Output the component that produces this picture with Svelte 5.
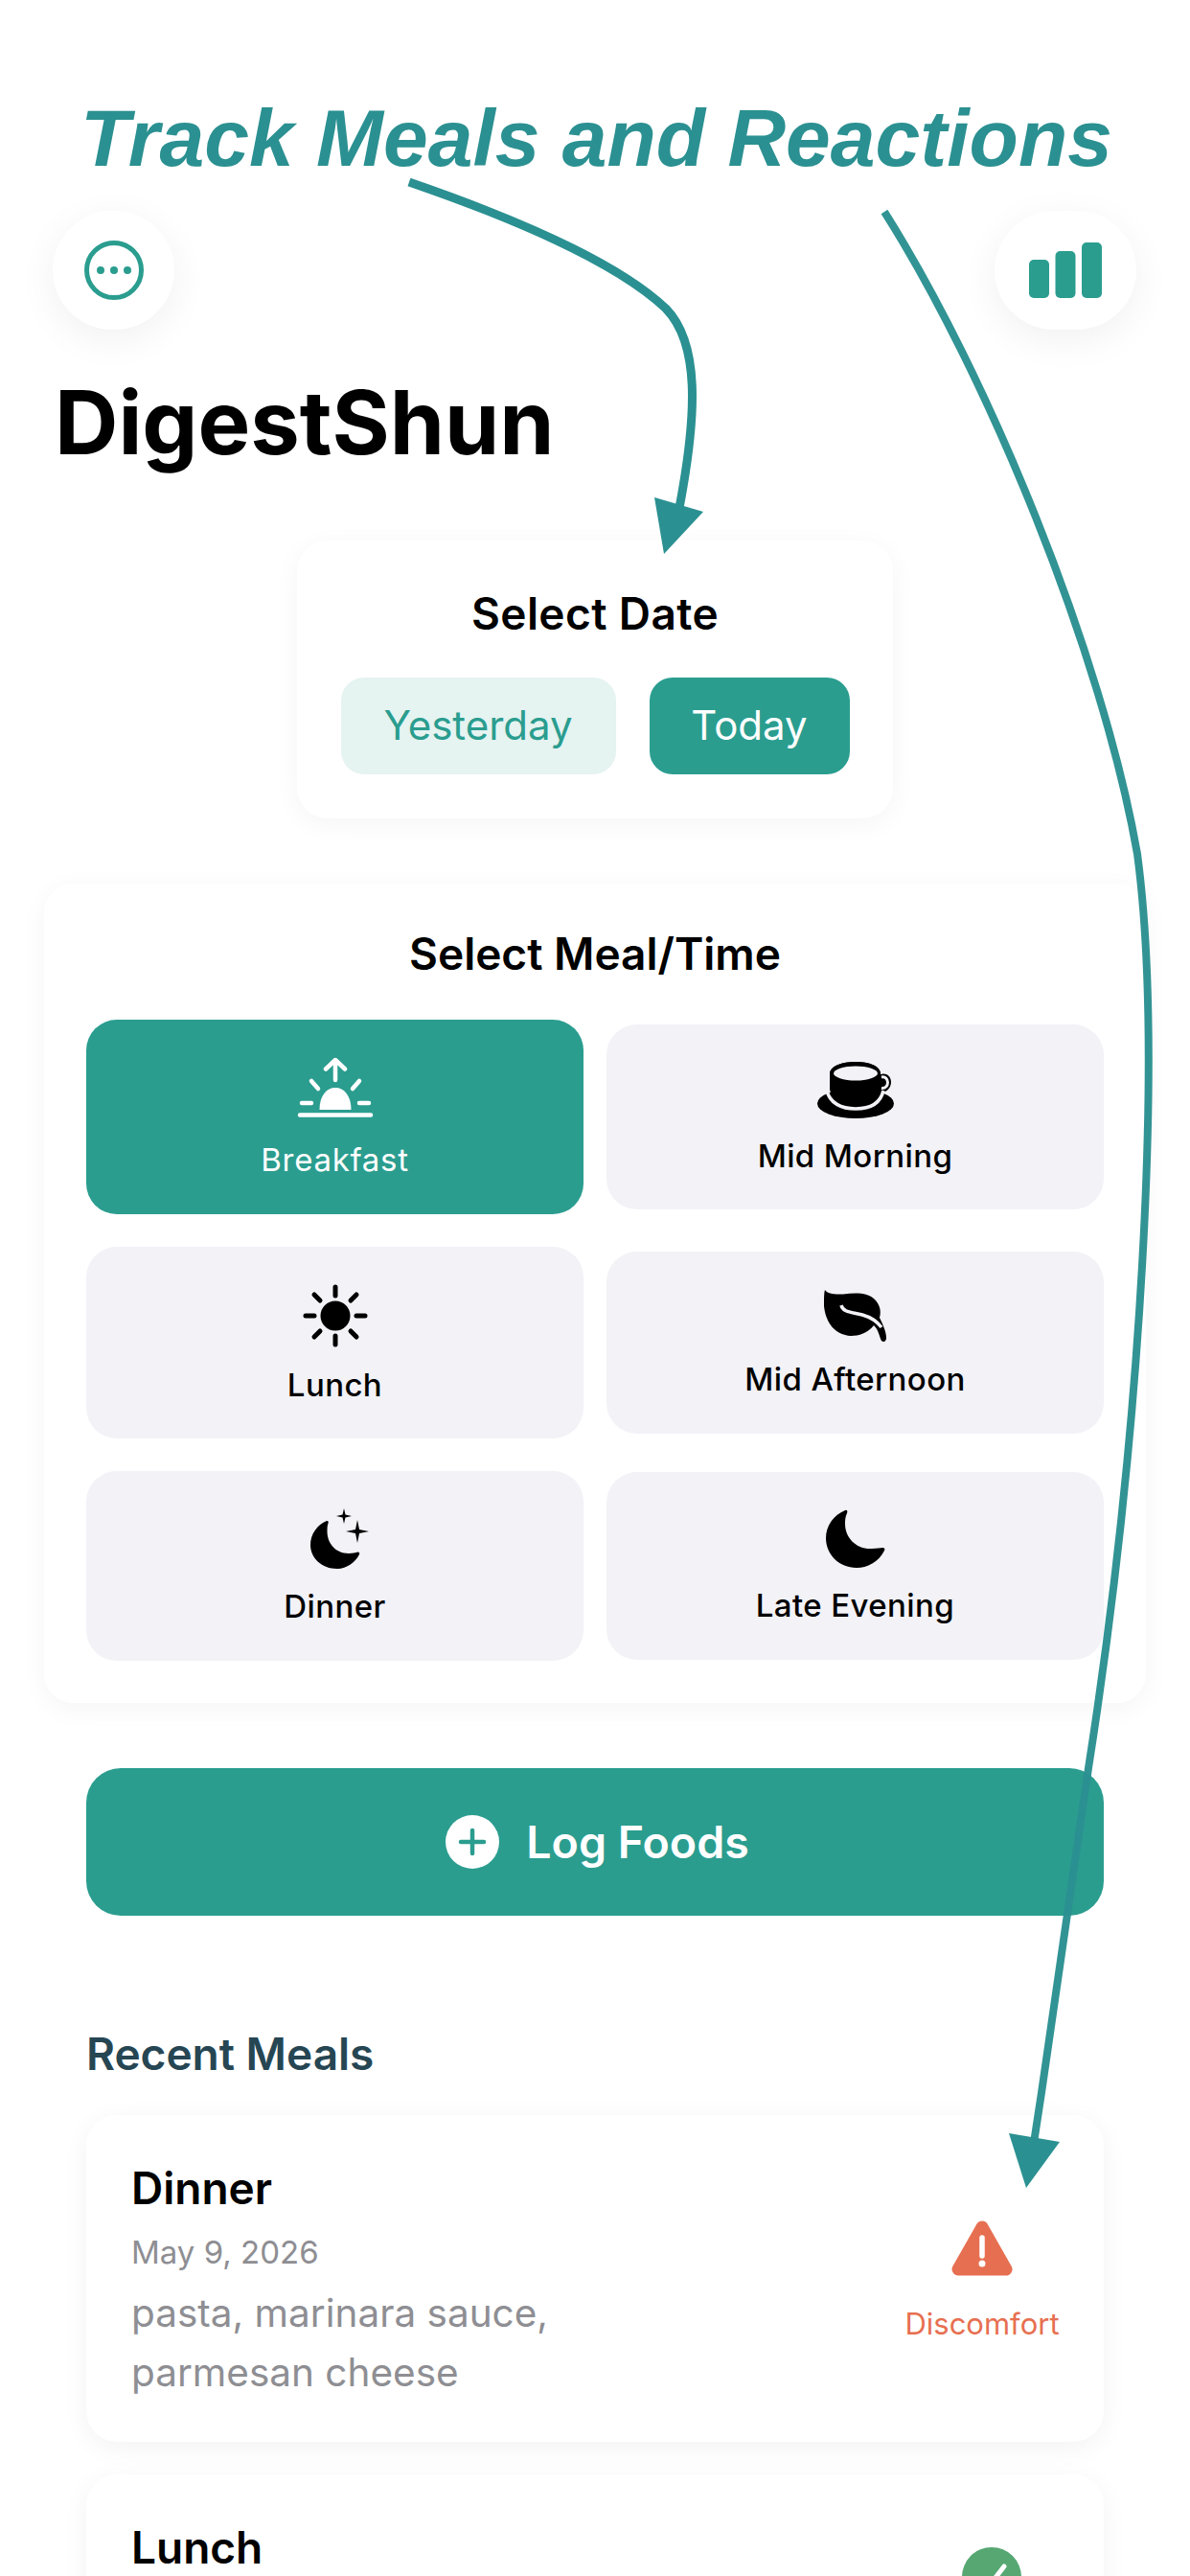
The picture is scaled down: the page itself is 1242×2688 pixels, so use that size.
<script>
	const meals = [
		{ name: 'Breakfast', icon: 'sunrise', selected: true },
		{ name: 'Mid Morning', icon: 'cup' },
		{ name: 'Lunch', icon: 'sun' },
		{ name: 'Mid Afternoon', icon: 'leaf' },
		{ name: 'Dinner', icon: 'moonstars' },
		{ name: 'Late Evening', icon: 'moon' }
	];
</script>

<div class="app">
	<header class="topbar">
		<button class="round menu" aria-label="Menu">
			<svg width="64" height="64" viewBox="0 0 64 64">
				<circle cx="32" cy="32" r="28.5" fill="none" stroke="#2a9d8f" stroke-width="5" />
				<circle cx="18" cy="32" r="4" fill="#2a9d8f" />
				<circle cx="32" cy="32" r="4" fill="#2a9d8f" />
				<circle cx="46" cy="32" r="4" fill="#2a9d8f" />
			</svg>
		</button>
		<button class="round stats" aria-label="Stats">
			<svg width="76" height="58" viewBox="0 0 76 58" fill="#2a9d8f">
				<rect x="0" y="18" width="21" height="40" rx="5" />
				<rect x="27.5" y="9" width="21" height="49" rx="5" />
				<rect x="55" y="0" width="21" height="58" rx="5" />
			</svg>
		</button>
	</header>

	<h1>DigestShun</h1>

	<section class="date-card">
		<h2>Select Date</h2>
		<div class="date-row">
			<button class="date yesterday">Yesterday</button>
			<button class="date today">Today</button>
		</div>
	</section>

	<section class="meal-card">
		<h2>Select Meal/Time</h2>
		<div class="meal-grid">
			{#each meals as meal}
				<button class="meal" class:selected={meal.selected}>
					{#if meal.icon === 'sunrise'}
						<svg class="sunrise" width="80" height="68" viewBox="0 0 80 68" fill="none" stroke="#fff" stroke-width="4.500" stroke-linecap="round" stroke-linejoin="round">
							<path d="M40 3V24M30 12.5L40 3L50 12.5" />
							<path d="M15 25L22 33M65 25L58 33M5 48H15M65 48H75M3 60.5H77" />
							<path d="M23.5 55C23.5 40 31 32 40 32C49 32 56.5 40 56.5 55Z" fill="#fff" stroke="none" />
						</svg>
					{:else if meal.icon === 'cup'}
						<svg width="80" height="59" viewBox="0 0 80 59">
							<ellipse cx="40" cy="43.5" rx="40" ry="15.5" fill="#000" />
							<path d="M13 13C13 4 26 0 40 0C54 0 66 4 66 13C71 11 77 14 77 21C77 28 71 33 65 32C62 42 52 46 40 46C24 46 13 38 13 24Z" fill="#000" />
							<path d="M10 30C13 43 25 49 40 49C55 49 66 43 69 30" fill="none" stroke="#f2f2f7" stroke-width="3.5" />
							<path d="M13 13C13 4 26 0 40 0C54 0 66 4 66 13V27C66 38 54 45 40 45C26 45 13 38 13 27Z" fill="#000" />
							<ellipse cx="40" cy="12" rx="23" ry="7.5" fill="#f2f2f7" />
							<path d="M67 16C71 15 73.5 18 73.5 21.5C73.5 25 71 28 67 27.5" fill="none" stroke="#f2f2f7" stroke-width="3" />
						</svg>
					{:else if meal.icon === 'sun'}
						<svg width="70" height="66" viewBox="0 0 70 66" fill="none" stroke="#000" stroke-width="5" stroke-linecap="round">
							<circle cx="35" cy="33" r="15.5" fill="#000" stroke="none" />
							<path d="M35 3V12M35 54V63M4 33H13M57 33H66M13 11L19 17M57 11L51 17M13 55L19 49M57 55L51 49" />
						</svg>
					{:else if meal.icon === 'leaf'}
						<svg width="66" height="55" viewBox="0 0 66 55">
							<path d="M1 1C4 5 10 6 20 5.5C32 4 46 3 54 12C58 17 60 22 58 30C60 34 65 44 65 51C65 56 60 56 59 52C57 46 56 42 52 38C46 46 36 49 28 49C12 48 2 36 0 18C0 10 0 4 1 1Z" fill="#000" />
							<path d="M18 17C20 25 30 24 40 27C47 29 54 32 60 40" fill="none" stroke="#f2f2f7" stroke-width="3.5" />
						</svg>
					{:else if meal.icon === 'moonstars'}
						<svg width="72" height="63" viewBox="0 0 72 63">
							<path d="M27 13C28.5 12.5 29 14 28.5 15.5C27.5 18 27.5 21 27.5 24C27.5 36 36 47 50 47C54 47 57 46 59.5 45.5C61 45.5 61.5 46.5 61 48C57 56 48 63 38 63C22 63 10 52 10 38C10 27 17 17 27 13Z" fill="#000" />
							<path d="M59 12L61 22L71 24L61 26L59 36L57 26L47 24L57 22Z" fill="#000" />
							<path d="M45 0L46.5 6.500L53 8L46.5 9.500L45 16L43.500 9.500L37 8L43.500 6.500Z" fill="#000" />
						</svg>
					{:else}
						<svg width="62" height="61" viewBox="0 0 62 61">
							<path d="M20 1C22 0 23 2 22 4C20 8 20 12 20 15C20 30 32 42 48 41C53 41 57 40 59 40C61 40 62 41 61 43C55 55 43 61 32 61C14 61 0 47 0 30C0 17 8 6 20 1Z" fill="#000" />
						</svg>
					{/if}
					<span>{meal.name}</span>
				</button>
			{/each}
		</div>
	</section>

	<button class="log">
		<svg width="56" height="56" viewBox="0 0 56 56">
			<circle cx="28" cy="28" r="28" fill="#fff" />
			<path d="M28 16V40M16 28H40" stroke="#2a9d8f" stroke-width="4.500" stroke-linecap="round" />
		</svg>
		<span>Log Foods</span>
	</button>

	<h3>Recent Meals</h3>

	<article class="recent">
		<div class="recent-text">
			<h4>Dinner</h4>
			<p class="when">May 9, 2026</p>
			<p class="foods">pasta, marinara sauce,<br />parmesan cheese</p>
		</div>
		<div class="reaction">
			<svg width="64" height="58" viewBox="0 0 64 58">
				<path d="M32 7L57 51H7Z" fill="#e76f51" stroke="#e76f51" stroke-width="13" stroke-linejoin="round" />
				<path d="M32 18V37" stroke="#fff" stroke-width="5.500" stroke-linecap="round" />
				<circle cx="32" cy="45" r="3.500" fill="#fff" />
			</svg>
			<span>Discomfort</span>
		</div>
	</article>

	<article class="recent second">
		<div class="recent-text">
			<h4>Lunch</h4>
		</div>
		<div class="reaction good">
			<svg width="62" height="62" viewBox="0 0 62 62">
				<circle cx="31" cy="31" r="31" fill="#57a773" />
				<path d="M18 33L27 42L44 20" fill="none" stroke="#fff" stroke-width="5" stroke-linecap="round" stroke-linejoin="round" />
			</svg>
		</div>
	</article>

	<div class="promo">Track Meals and Reactions</div>

	<svg class="arrows" width="1242" height="2688" viewBox="0 0 1242 2688" fill="none">
		<path d="M427 190C520 222 640 270 695 322C730 358 728 430 709 530" stroke="#2b9091" stroke-width="9" />
		<path d="M683 519L734 534L693 578Z" fill="#2b9091" />
		<path d="M923 221C1030 390 1150 680 1187 891C1215 1100 1190 1500 1136 1845C1120 1960 1100 2100 1079 2236" stroke="#2b9091" stroke-opacity="0.97" stroke-width="8" />
		<path d="M1053 2226L1106 2235L1071 2283Z" fill="#2b9091" />
	</svg>
</div>

<style>
	:global(body) {
		margin: 0;
		background: #fff;
	}

	.app {
		position: relative;
		height: 2688px;
		overflow: hidden;
		padding-top: 220px;
		box-sizing: border-box;
		font-family: Inter, 'Liberation Sans', sans-serif;
		color: #000;
		background: #fff;
	}

	button {
		border: none;
		padding: 0;
		font-family: inherit;
	}

	.topbar {
		display: flex;
		justify-content: space-between;
		padding: 0 56px 0 55px;
	}

	.round {
		height: 124px;
		border-radius: 62px;
		background: #fff;
		box-shadow: 0 10px 40px rgba(0, 0, 0, 0.06);
		display: flex;
		align-items: center;
		justify-content: center;
	}

	.menu {
		width: 127px;
	}

	.stats {
		width: 148px;
	}

	h1 {
		margin: 47px 0 0 57px;
		font-size: 92px;
		line-height: 100px;
		font-weight: 700;
	}

	h2 {
		margin: 0;
		font-size: 46px;
		line-height: 56px;
		font-weight: 600;
		text-align: center;
	}

	.date-card {
		width: 622px;
		margin: 73px auto 0;
		box-sizing: border-box;
		padding: 46px 0;
		background: #fff;
		border-radius: 32px;
		box-shadow: 0 6px 28px rgba(0, 0, 0, 0.045);
	}

	.date-card h2 {
		position: relative;
		top: 2px;
		letter-spacing: 0.4px;
	}

	.date-row {
		display: flex;
		justify-content: center;
		gap: 35px;
		margin-top: 41px;
	}

	.date {
		height: 101px;
		padding-bottom: 2px;
		border-radius: 24px;
		font-size: 42px;
	}

	.yesterday {
		width: 287px;
		background: #e5f3f1;
		color: #2a9d8f;
	}

	.today {
		width: 209px;
		background: #2a9d8f;
		color: #fff;
	}

	.meal-card {
		margin: 68px 46px 0;
		padding: 45px 44px 44px;
		background: #fff;
		border-radius: 30px;
		box-shadow: 0 6px 28px rgba(0, 0, 0, 0.045);
	}

	.meal-grid {
		display: grid;
		grid-template-columns: 519px 519px;
		gap: 34px 24px;
		align-items: center;
		margin-top: 41px;
	}

	.meal {
		display: flex;
		flex-direction: column;
		align-items: center;
		padding: 39px 0 30.5px;
		background: #f2f2f7;
		border-radius: 32px;
		color: #000;
	}

	.meal.selected {
		background: #2a9d8f;
		color: #fff;
	}

	.meal svg {
		display: block;
	}

	.meal span {
		display: block;
		margin-top: 13px;
		font-size: 33px;
		line-height: 52px;
		font-weight: 500;
		letter-spacing: 0.4px;
	}

	.meal.selected span {
		font-weight: 400;
		letter-spacing: 0.7px;
	}

	.log {
		display: flex;
		align-items: center;
		justify-content: center;
		gap: 28px;
		box-sizing: border-box;
		width: 1062px;
		height: 154px;
		margin: 68px 0 0 90px;
		padding-left: 5px;
		background: #2a9d8f;
		border-radius: 36px;
		color: #fff;
		font-size: 46.5px;
		font-weight: 600;
	}

	h3 {
		margin: 117px 0 0 90px;
		font-size: 46px;
		line-height: 54px;
		font-weight: 600;
		color: #264653;
	}

	.recent {
		display: flex;
		justify-content: space-between;
		box-sizing: border-box;
		width: 1062px;
		height: 341px;
		margin: 34px 0 0 90px;
		padding: 46px 47px 0;
		background: #fff;
		border-radius: 32px;
		box-shadow: 0 6px 28px rgba(0, 0, 0, 0.05);
	}

	h3 + .recent {
		margin-top: 37px;
	}

	h4 {
		margin: 0;
		font-size: 46px;
		line-height: 60px;
		font-weight: 600;
	}

	.when {
		margin: 15px 0 0;
		font-size: 33px;
		line-height: 44px;
		color: #8e8e93;
	}

	.foods {
		margin: 11px 0 0;
		font-size: 40.5px;
		line-height: 62px;
		color: #8e8e93;
	}

	.reaction {
		display: flex;
		flex-direction: column;
		align-items: center;
		width: 160px;
		padding-top: 64px;
		color: #e76f51;
		font-size: 31px;
	}

	.reaction span {
		margin-top: 28px;
		line-height: 44px;
	}

	.second {
		padding-top: 46px;
	}

	.good {
		padding-top: 30px;
		margin-right: -10px;
	}

	.promo {
		position: absolute;
		left: 84px;
		top: 96px;
		font-family: 'Liberation Sans', Arial, sans-serif;
		font-size: 84px;
		line-height: 96px;
		font-weight: 700;
		font-style: italic;
		color: #2b9091;
		white-space: nowrap;
	}

	.arrows {
		position: absolute;
		top: 0;
		left: 0;
		pointer-events: none;
	}
</style>
